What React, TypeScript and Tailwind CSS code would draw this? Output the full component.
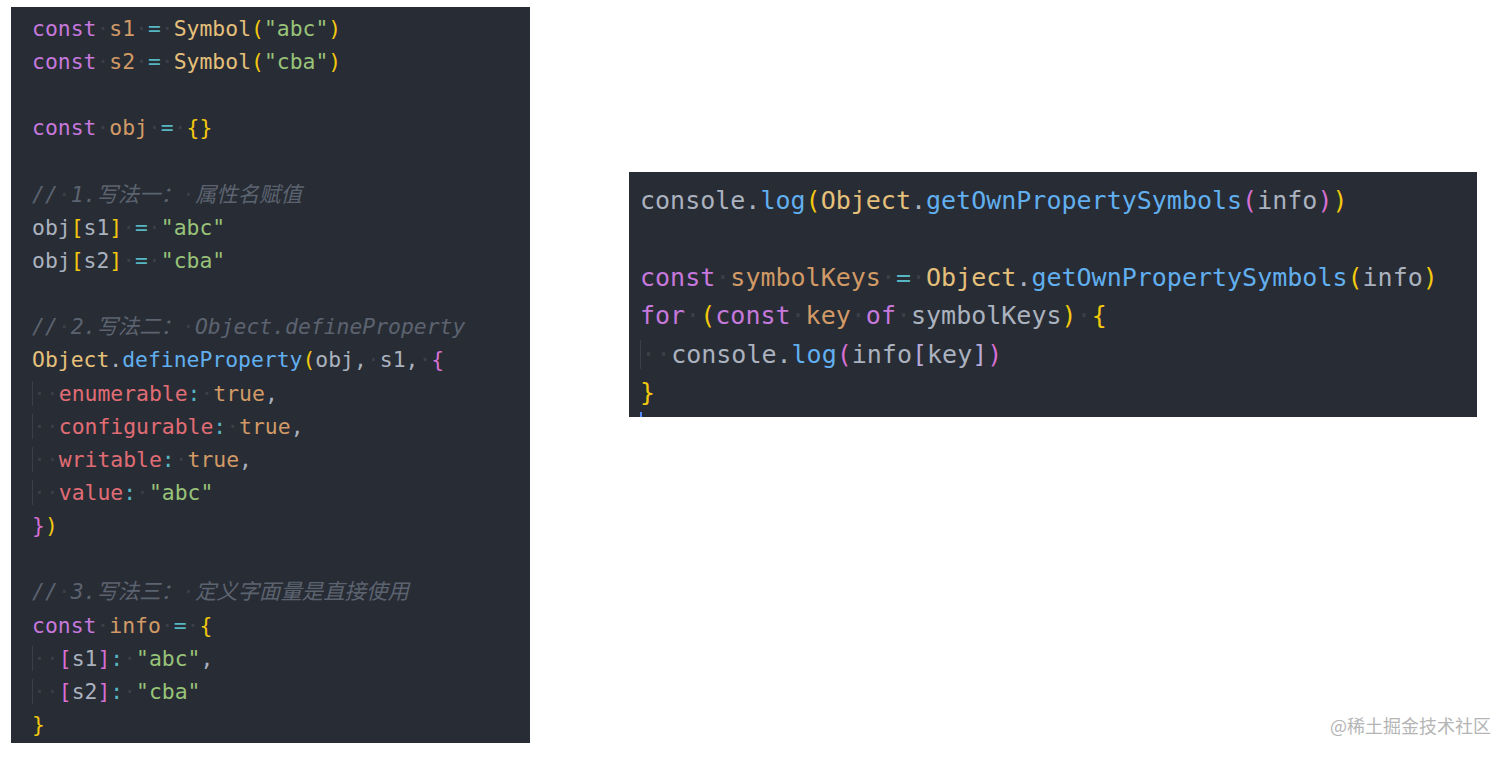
import React from "react";

// token colours (One Dark style + bracket pair colours)
const KW = "text-[#c678dd]";
const VAR = "text-[#d19a66]";
const TYPE = "text-[#e5c07b]";
const OP = "text-[#56b6c2]";
const STR = "text-[#98c379]";
const FN = "text-[#61afef]";
const PROP = "text-[#e06c75]";
const TXT = "text-[#abb2bf]";
const CMT = "text-[#5c6370] italic";
const B1 = "text-[#f2c80f]";
const B2 = "text-[#d66fd3]";
const B3 = "text-[#b7a9d8]";

type Tok = [string, string];
type Line = { indent?: boolean; toks: Tok[] };

const leftCode: Line[] = [
  { toks: [["const", KW], [" ", ""], ["s1", VAR], [" ", ""], ["=", OP], [" ", ""], ["Symbol", TYPE], ["(", B1], ['"abc"', STR], [")", B1]] },
  { toks: [["const", KW], [" ", ""], ["s2", VAR], [" ", ""], ["=", OP], [" ", ""], ["Symbol", TYPE], ["(", B1], ['"cba"', STR], [")", B1]] },
  { toks: [] },
  { toks: [["const", KW], [" ", ""], ["obj", VAR], [" ", ""], ["=", OP], [" ", ""], ["{}", B1]] },
  { toks: [] },
  { toks: [["//", CMT], [" ", ""], ["1.写法一：", CMT], [" ", ""], ["属性名赋值", CMT]] },
  { toks: [["obj", TXT], ["[", B1], ["s1", TXT], ["]", B1], [" ", ""], ["=", OP], [" ", ""], ['"abc"', STR]] },
  { toks: [["obj", TXT], ["[", B1], ["s2", TXT], ["]", B1], [" ", ""], ["=", OP], [" ", ""], ['"cba"', STR]] },
  { toks: [] },
  { toks: [["//", CMT], [" ", ""], ["2.写法二：", CMT], [" ", ""], ["Object.defineProperty", CMT]] },
  { toks: [["Object", TYPE], [".", TXT], ["defineProperty", FN], ["(", B1], ["obj,", TXT], [" ", ""], ["s1,", TXT], [" ", ""], ["{", B2]] },
  { indent: true, toks: [["enumerable", PROP], [":", OP], [" ", ""], ["true", VAR], [",", TXT]] },
  { indent: true, toks: [["configurable", PROP], [":", OP], [" ", ""], ["true", VAR], [",", TXT]] },
  { indent: true, toks: [["writable", PROP], [":", OP], [" ", ""], ["true", VAR], [",", TXT]] },
  { indent: true, toks: [["value", PROP], [":", OP], [" ", ""], ['"abc"', STR]] },
  { toks: [["}", B2], [")", B1]] },
  { toks: [] },
  { toks: [["//", CMT], [" ", ""], ["3.写法三：", CMT], [" ", ""], ["定义字面量是直接使用", CMT]] },
  { toks: [["const", KW], [" ", ""], ["info", VAR], [" ", ""], ["=", OP], [" ", ""], ["{", B1]] },
  { indent: true, toks: [["[", B2], ["s1", TXT], ["]", B2], [":", OP], [" ", ""], ['"abc"', STR], [",", TXT]] },
  { indent: true, toks: [["[", B2], ["s2", TXT], ["]", B2], [":", OP], [" ", ""], ['"cba"', STR]] },
  { toks: [["}", B1]] },
];

const rightCode: Line[] = [
  { toks: [["console", TXT], [".", TXT], ["log", FN], ["(", B1], ["Object", TYPE], [".", TXT], ["getOwnPropertySymbols", FN], ["(", B2], ["info", TXT], [")", B2], [")", B1]] },
  { toks: [] },
  { toks: [["const", KW], [" ", ""], ["symbolKeys", VAR], [" ", ""], ["=", OP], [" ", ""], ["Object", TYPE], [".", TXT], ["getOwnPropertySymbols", FN], ["(", B1], ["info", TXT], [")", B1]] },
  { toks: [["for", KW], [" ", ""], ["(", B1], ["const", KW], [" ", ""], ["key", VAR], [" ", ""], ["of", KW], [" ", ""], ["symbolKeys", TXT], [")", B1], [" ", ""], ["{", B1]] },
  { indent: true, toks: [["console", TXT], [".", TXT], ["log", FN], ["(", B2], ["info", TXT], ["[", B3], ["key", TXT], ["]", B3], [")", B2]] },
  { toks: [["}", B1]] },
];

function Dot() {
  return <span className="text-[#3b4048] not-italic">·</span>;
}

function CodeLine({ line }: { line: Line }) {
  return (
    <div className="whitespace-pre">
      {line.indent && (
        <span className="border-l border-[#3b4048]">
          <Dot />
          <Dot />
        </span>
      )}
      {line.toks.map(([text, cls], i) =>
        text === " " ? <Dot key={i} /> : <span key={i} className={cls}>{text}</span>
      )}
      {line.toks.length === 0 && !line.indent && " "}
    </div>
  );
}

const mono = "font-['DejaVu_Sans_Mono','Noto_Sans_CJK_SC',monospace]";

export default function App() {
  return (
    <div className="relative w-[1512px] h-[759px] bg-white overflow-hidden">
      <div className="flex items-start">
        <div className={`ml-[11px] mt-[7px] w-[519px] h-[736px] bg-[#282c34] pl-[21px] pt-[5px] text-[21.4px] leading-[33.14px] ${mono}`}>
          {leftCode.map((l, i) => (
            <CodeLine key={i} line={l} />
          ))}
        </div>

        <div className={`ml-[99px] mt-[172px] w-[848px] h-[245px] overflow-hidden bg-[#282c34] pl-[11px] pt-[10px] text-[25px] leading-[38.4px] ${mono}`}>
          {rightCode.map((l, i) => (
            <CodeLine key={i} line={l} />
          ))}
          <div className="w-[2px] h-[12px] bg-[#528bff]" />
        </div>
      </div>

      <div className="absolute right-[21px] bottom-[20px] text-[18px] text-[#b5b5b5] font-['Noto_Sans_CJK_SC',sans-serif]">
        @稀土掘金技术社区
      </div>
    </div>
  );
}
